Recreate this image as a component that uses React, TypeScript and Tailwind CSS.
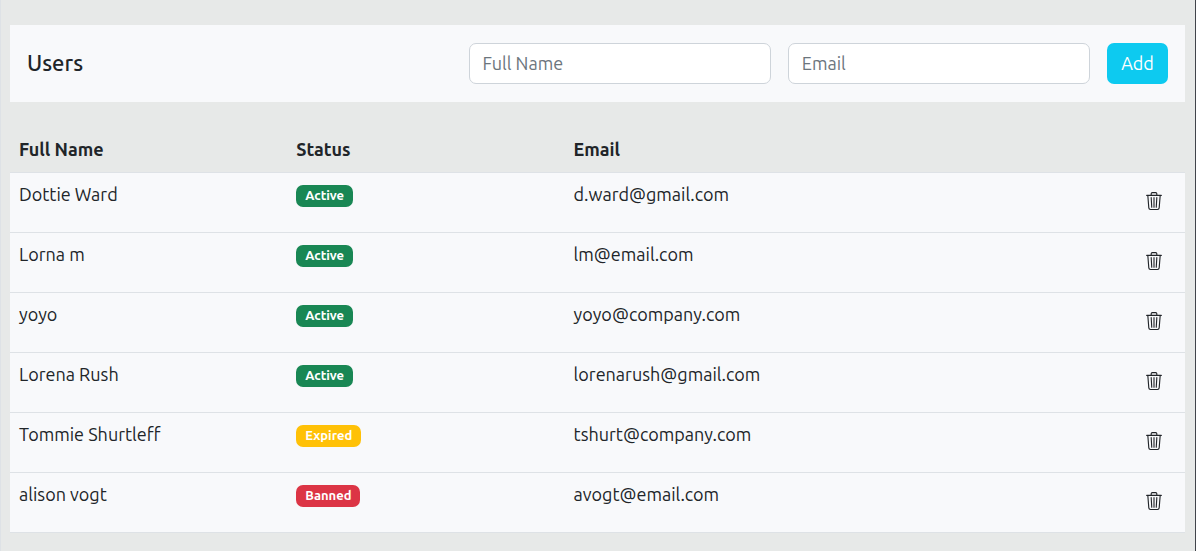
import { useState, type FormEvent } from "react";
import { BsTrash3 } from "react-icons/bs";

type Status = "Active" | "Expired" | "Banned";

interface User {
  id: number;
  name: string;
  status: Status;
  email: string;
}

const initialUsers: User[] = [
  { id: 1, name: "Dottie Ward", status: "Active", email: "d.ward@gmail.com" },
  { id: 2, name: "Lorna m", status: "Active", email: "lm@email.com" },
  { id: 3, name: "yoyo", status: "Active", email: "yoyo@company.com" },
  { id: 4, name: "Lorena Rush", status: "Active", email: "lorenarush@gmail.com" },
  { id: 5, name: "Tommie Shurtleff", status: "Expired", email: "tshurt@company.com" },
  { id: 6, name: "alison vogt", status: "Banned", email: "avogt@email.com" },
];

const badgeColors: Record<Status, string> = {
  Active: "bg-[#198754]",
  Expired: "bg-[#ffc107]",
  Banned: "bg-[#dc3545]",
};

const inputClass =
  "h-[41px] min-w-0 flex-1 rounded-[7px] border border-[#ced4da] bg-white px-[13px] pb-[2px] text-[18px] text-[#212529] placeholder:text-[#6c757d] placeholder:opacity-100";

export default function App() {
  const [users, setUsers] = useState(initialUsers);
  const [name, setName] = useState("");
  const [email, setEmail] = useState("");

  const addUser = (event: FormEvent) => {
    event.preventDefault();
    if (!name || !email) return;
    setUsers([...users, { id: Date.now(), name, status: "Active", email }]);
    setName("");
    setEmail("");
  };

  return (
    <main className="min-h-screen border-l border-r border-l-[#dee2e6] border-r-[#41444b] bg-[#e7e9e8] pt-[25px] pr-[10px] pb-[17px] pl-[9px] font-['Ubuntu','Noto_Sans',sans-serif] text-[18px] leading-[26px] text-[#212529]">
      <header className="flex items-center justify-between bg-[#f8f9fb] px-[17px] py-[18px]">
        <h1 className="pb-[2px] text-[22px] font-medium">Users</h1>
        <form onSubmit={addUser} className="flex w-[61.3%] gap-[17px]">
          <input
            type="text"
            aria-label="Full Name"
            placeholder="Full Name"
            value={name}
            onChange={(e) => setName(e.target.value)}
            className={inputClass}
          />
          <input
            type="email"
            aria-label="Email"
            placeholder="Email"
            value={email}
            onChange={(e) => setEmail(e.target.value)}
            className={inputClass}
          />
          <button type="submit" className="w-[61px] rounded-[7px] bg-[#0dcaf0] pb-[2px] text-white">
            Add
          </button>
        </form>
      </header>

      <table className="mt-[26px] w-full table-fixed border-collapse text-left">
        <thead>
          <tr className="h-11 border-b border-[#dee2e6] align-top">
            <th scope="col" className="w-[23.6%] px-[9px] pt-2 font-bold">Full Name</th>
            <th scope="col" className="w-[23.6%] px-[9px] pt-2 font-bold">Status</th>
            <th scope="col" className="px-[9px] pt-2 font-bold">Email</th>
            <th scope="col" aria-label="Actions" className="w-14" />
          </tr>
        </thead>
        <tbody>
          {users.map((user) => (
            <tr key={user.id} className="h-[60px] border-b border-[#dee2e6] bg-[#f8f9fb] align-top">
              <td className="px-[9px] pt-2">{user.name}</td>
              <td className="px-[9px] pt-3">
                <span
                  className={`block h-[22px] w-fit rounded-[7px] px-[9px] text-[13px] leading-[21px] font-bold text-white ${badgeColors[user.status]}`}
                >
                  {user.status}
                </span>
              </td>
              <td className="px-[9px] pt-2">{user.email}</td>
              <td className="pt-[19px]">
                <button
                  type="button"
                  aria-label={`Delete ${user.name}`}
                  onClick={() => setUsers(users.filter((u) => u.id !== user.id))}
                  className="ml-4 block"
                >
                  <BsTrash3 className="size-[18px]" />
                </button>
              </td>
            </tr>
          ))}
        </tbody>
      </table>
    </main>
  );
}
